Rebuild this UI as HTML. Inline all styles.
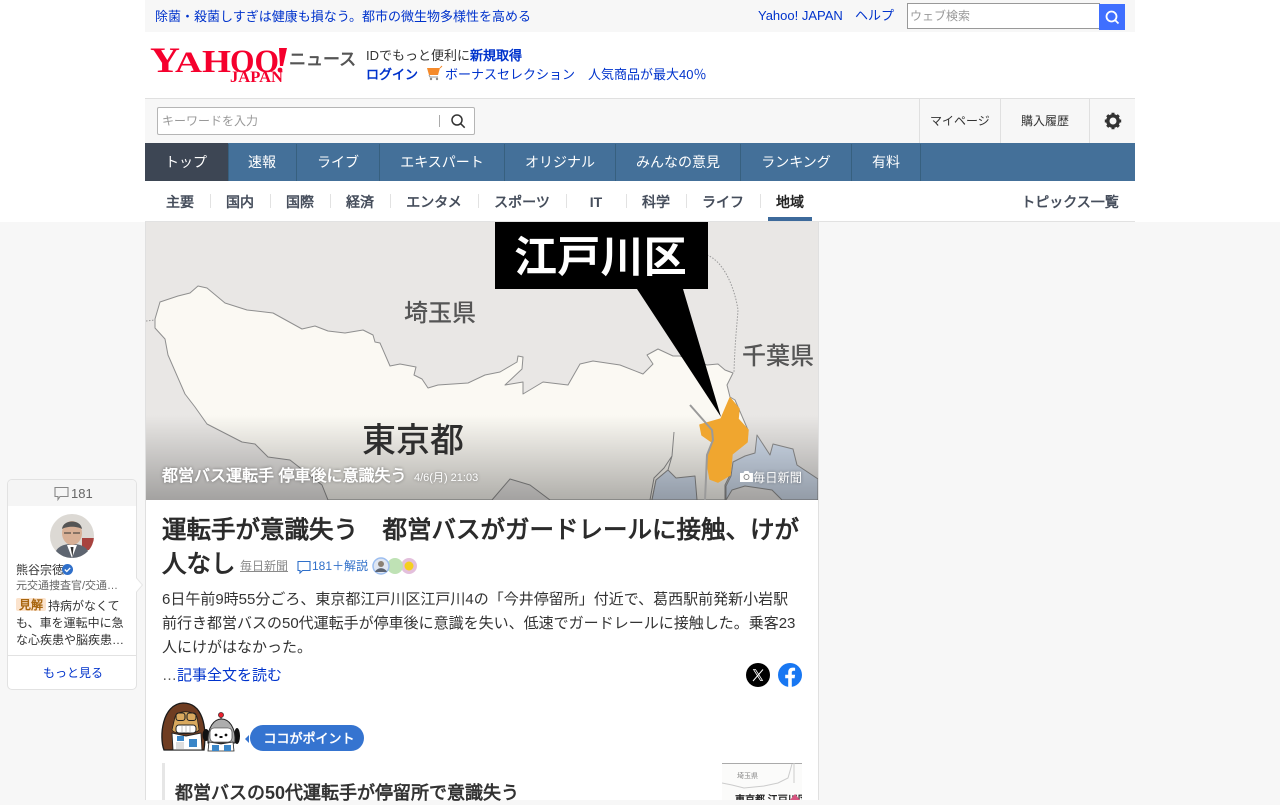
<!DOCTYPE html>
<html lang="ja"><head><meta charset="utf-8"><title>Yahoo!ニュース</title>
<style>
html,body{margin:0;padding:0}
body{width:1280px;height:800px;overflow:hidden;position:relative;background:#f7f7f7;font-family:"Liberation Sans","WenQuanYi Zen Hei",sans-serif;color:#333}
.a{position:absolute}
.t{position:absolute;white-space:nowrap}
.l{color:#0033cc}
.j{font-family:"Noto Sans CJK JP",sans-serif}
.n{color:#fff;font-size:14px;line-height:38px;top:143px;text-align:center;transform:translateX(-50%)}
.s{top:193px;font-size:14px;font-weight:700;line-height:18px;color:#464e5c;transform:translateX(-50%)}
.v{position:absolute;top:144px;width:1px;height:37px;background:#37607f}
.d{position:absolute;top:194px;width:1px;height:14px;background:#e2e2e2}
</style></head><body>
<div class="a" style="left:0;top:0;width:1280px;height:222px;background:#fff"></div>
<div class="a" style="left:145px;top:0;width:990px;height:32px;background:#f7f7f7"></div>
<div class="t l" style="left:155px;top:7px;font-size:13px;line-height:18px">除菌<span class="j">・</span>殺菌しすぎは健康も損なう。都市の微生物多様性を高める</div>
<div class="t l" style="left:758px;top:7px;font-size:13px;line-height:18px">Yahoo! JAPAN</div>
<div class="t l" style="left:855px;top:7px;font-size:13px;line-height:18px">ヘルプ</div>
<div class="a" style="left:907px;top:3px;width:191px;height:24px;border:1px solid #999;background:#fff"></div>
<div class="t" style="left:910px;top:8px;font-size:12px;line-height:16px;color:#999">ウェブ検索</div>
<div class="a" style="left:1099px;top:4px;width:26px;height:26px;background:#3f6fff"></div>
<svg class="a" style="left:1099px;top:4px" width="26" height="26" fill="none" stroke="#fff" stroke-width="1.800"><circle cx="12.500" cy="12.500" r="5"/><path d="M16 16l3.500 3.500"/></svg>

<svg class="a" style="left:148px;top:44px" width="142" height="42">
<g font-family="Liberation Serif,serif" font-weight="700" fill="#f5002d">
<text x="2" y="28" font-size="36" textLength="30" lengthAdjust="spacingAndGlyphs">Y</text>
<text x="27" y="28" font-size="30" textLength="27" lengthAdjust="spacingAndGlyphs">A</text>
<text x="54" y="28" font-size="32" textLength="29" lengthAdjust="spacingAndGlyphs">H</text>
<text x="82" y="28" font-size="33" textLength="49" lengthAdjust="spacingAndGlyphs">OO</text>
<text x="82" y="38" font-size="16" textLength="53" lengthAdjust="spacingAndGlyphs">JAPAN</text>
</g>
<path d="M131 4l8 0-4 18h-3z" fill="#f5002d"/><circle cx="132" cy="26" r="2.400" fill="#f5002d"/>
</svg>
<div class="t" style="left:289px;top:48px;font-size:17px;line-height:24px;font-weight:700;color:#555">ニュース</div>
<div class="t" style="left:366px;top:47px;font-size:13px;line-height:18px;color:#333">IDでもっと便利に<b class="l">新規取得</b></div>
<div class="t l" style="left:366px;top:66px;font-size:13px;line-height:18px;font-weight:700">ログイン</div>
<svg class="a" style="left:426px;top:65px" width="18" height="16"><path d="M1 3h13l-2 7H3z" fill="#f58a2a"/><path d="M3 10l1 2h8" stroke="#999" fill="none"/><circle cx="5" cy="14" r="1.200" fill="#888"/><circle cx="11" cy="14" r="1.200" fill="#888"/><path d="M14 3l2-2" stroke="#f58a2a"/></svg>
<div class="t l" style="left:445px;top:66px;font-size:13px;line-height:18px">ボーナスセレクション　人気商品が最大40％</div>

<div class="a" style="left:145px;top:98px;width:990px;height:45px;background:#f7f7f7;border-top:1px solid #e0e0e0;box-sizing:border-box"></div>
<div class="a" style="left:157px;top:107px;width:316px;height:26px;background:#fff;border:1px solid #b5b5b5;border-radius:2px"></div>
<div class="t" style="left:162px;top:113px;font-size:12px;line-height:16px;color:#999">キーワードを入力</div>
<div class="a" style="left:439px;top:115px;width:1px;height:12px;background:#aaa"></div>
<svg class="a" style="left:449.500px;top:112.500px" width="18" height="18" fill="none" stroke="#333" stroke-width="1.500"><circle cx="7" cy="7" r="5"/><path d="M10.700 10.700l4 4"/></svg>
<div class="a" style="left:919px;top:99px;width:1px;height:44px;background:#e0e0e0"></div>
<div class="a" style="left:1000px;top:99px;width:1px;height:44px;background:#e0e0e0"></div>
<div class="a" style="left:1089px;top:99px;width:1px;height:44px;background:#e0e0e0"></div>
<div class="t" style="left:930px;top:113px;font-size:12px;line-height:16px;color:#333">マイページ</div>
<div class="t" style="left:1021px;top:113px;font-size:12px;line-height:16px;color:#333">購入履歴</div>
<svg class="a" style="left:1104px;top:112px" width="18" height="18" viewBox="0 0 18 18"><circle cx="9" cy="9" r="5.200" fill="none" stroke="#333" stroke-width="3.400"/><g stroke="#333" stroke-width="3"><path d="M9 .8v3M9 14.200v3M.8 9h3M14.200 9h3M3.200 3.200l2.100 2.100M12.700 12.700l2.100 2.100M14.800 3.200l-2.100 2.100M5.300 12.700l-2.100 2.100"/></g></svg>

<div class="a" style="left:145px;top:143px;width:990px;height:38px;background:#447099"></div>
<div class="a" style="left:145px;top:143px;width:83px;height:38px;background:#3d4654"></div>
<div class="v" style="left:228px"></div><div class="v" style="left:296px"></div><div class="v" style="left:379px"></div><div class="v" style="left:504px"></div><div class="v" style="left:615px"></div><div class="v" style="left:740px"></div><div class="v" style="left:851px"></div><div class="v" style="left:920px"></div>
<div class="t n" style="left:186px">トップ</div><div class="t n" style="left:262px">速報</div><div class="t n" style="left:338px">ライブ</div><div class="t n" style="left:442px">エキスパート</div><div class="t n" style="left:560px">オリジナル</div><div class="t n" style="left:678px">みんなの意見</div><div class="t n" style="left:796px">ランキング</div><div class="t n" style="left:886px">有料</div>

<div class="t s" style="left:180px">主要</div><div class="d" style="left:210px"></div>
<div class="t s" style="left:240px">国内</div><div class="d" style="left:270px"></div>
<div class="t s" style="left:300px">国際</div><div class="d" style="left:330px"></div>
<div class="t s" style="left:360px">経済</div><div class="d" style="left:390px"></div>
<div class="t s" style="left:434px">エンタメ</div><div class="d" style="left:478px"></div>
<div class="t s" style="left:522px">スポーツ</div><div class="d" style="left:566px"></div>
<div class="t s" style="left:596px">IT</div><div class="d" style="left:626px"></div>
<div class="t s" style="left:656px">科学</div><div class="d" style="left:686px"></div>
<div class="t s" style="left:723px">ライフ</div><div class="d" style="left:760px"></div>
<div class="t s" style="left:790px;color:#222">地域</div>
<div class="t s" style="left:1070px">トピックス一覧</div>
<div class="a" style="left:768px;top:217px;width:44px;height:4px;background:#3d6a9b"></div>
<div class="a" style="left:145px;top:221px;width:990px;height:1px;background:#e2e2e2"></div>

<div class="a" style="left:145px;top:222px;width:674px;height:578px;background:#fff;border-left:1px solid #e0e0e0;border-right:1px solid #e0e0e0;box-sizing:border-box"></div>

<svg class="a" style="left:146px;top:222px" width="672" height="278" viewBox="146 222 672 278">
<defs><linearGradient id="g" x1="0" y1="0" x2="0" y2="1"><stop offset="0" stop-color="#000" stop-opacity="0"/><stop offset="1" stop-color="#000" stop-opacity=".3"/></linearGradient></defs>
<rect x="146" y="222" width="672" height="278" fill="#e9e7e5"/>
<path d="M155 319L160 302 178 296 190 293 198 286 207 288 225 303 247 310 273 313 302 329 315 326 328 331 345 333 363 330 373 335 375 342 380 343 390 366 400 364 416 367 414 375 422 379 428 388 438 385 468 383 485 375 500 372 517 362 518 356 523 357 522 369 505 385 523 382 523 394 543 382 568 385 580 364 593 361 620 365 643 374 653 364 647 355 658 349 673 356 680 356 707 365 718 364 725 370 733 373 727 385 730 397 735 400 748 430 747 442 732 454 730 475 725 485 725 500 660 500 550 500 530 485 510 479 492 500 328 500 322 485 290 460 268 457 255 444 242 442 207 424 195 407 185 394 168 355 165 339 155 328Z" fill="#fbf9f3" stroke="#8f8f8f" stroke-width="1" stroke-linejoin="round"/>
<path d="M650 500L654 478 664 468 672 456 674 432M672 456L668 470 656 480 652 500" fill="none" stroke="#8f8f8f" stroke-width="1"/>
<path d="M652 500L656 480 668 470 676 478 695 476 697 500ZM733 462L745 456 755 453 757 435 770 455 773 444 793 449 797 465 818 479V500H782L772 490 745 486 732 490 726 500V486L731 476Z" fill="#d2deee" stroke="#8f8f8f" stroke-width="1" stroke-linejoin="round"/>
<rect x="146" y="415" width="672" height="85" fill="url(#g)"/>
<path d="M730 398L739 409 738 419 748 430 747 442 732 454 730 475 718 482 710 479 707 462 712 442 702 435 700 425 721 419 727 405Z" fill="#f0a62f" stroke="#f0a62f" stroke-width="1.500" stroke-linejoin="round"/>
<path d="M690 405L712 430 713 440 707 455 705 500" fill="none" stroke="#9a9a9a" stroke-width="2"/>
<path d="M707 255C725 262 735 290 738 310 737 325 735 340 734 372" fill="none" stroke="#999" stroke-width="1" stroke-dasharray="1.500 1.500"/>
<path d="M146 321L155 320" stroke="#999" stroke-dasharray="1.500 1.500"/>
<rect x="495" y="222" width="213" height="67" fill="#000"/>
<path d="M637 289H683L721 417Z" fill="#000"/>
</svg>
<div class="t j" style="left:514px;top:222px;font-size:43px;line-height:64px;font-weight:700;color:#fff;letter-spacing:.2px">江戸川区</div>
<div class="t j" style="left:404px;top:295px;font-size:24px;line-height:32px;font-weight:500;color:#555">埼玉県</div>
<div class="t j" style="left:742px;top:338px;font-size:24px;line-height:32px;font-weight:500;color:#555">千葉県</div>
<div class="t j" style="left:362px;top:414px;font-size:34px;line-height:48px;font-weight:500;color:#2e2e2e">東京都</div>
<div class="t" style="left:162px;top:466px;font-size:16px;line-height:22px;font-weight:700;color:#fff;text-shadow:0 0 3px rgba(0,0,0,.4)">都営バス運転手 停車後に意識失う</div>
<div class="t" style="left:414px;top:470px;font-size:11px;line-height:16px;color:#fff;text-shadow:0 0 3px rgba(0,0,0,.4)">4/6(月) 21:03</div>
<svg class="a" style="left:740px;top:471px" width="13" height="11"><path d="M0 2h3.500l1-2h4l1 2H13v9H0z" fill="#fff"/><circle cx="6.500" cy="6" r="2.500" fill="none" stroke="#888"/></svg>
<div class="t" style="left:753px;top:469px;font-size:12.250px;line-height:18px;color:#fff;text-shadow:0 0 3px rgba(0,0,0,.4)">毎日新聞</div>

<div class="t" style="left:162px;top:514px;font-size:24.500px;line-height:34px;font-weight:700;color:#2b2b2b">運転手が意識失う　都営バスがガードレールに接触、けが</div>
<div class="t" style="left:162px;top:548px;font-size:24.500px;line-height:34px;font-weight:700;color:#2b2b2b">人なし</div>
<div class="t" style="left:240px;top:557px;font-size:12px;line-height:18px;color:#8a8a8a;text-decoration:underline">毎日新聞</div>
<svg class="a" style="left:297px;top:560px" width="15" height="14" fill="none" stroke="#2f6fc9" stroke-width="1.100"><path d="M1 1.500h12v9H5.500L3 13v-2.500H1z"/></svg>
<div class="t" style="left:312px;top:557px;font-size:12px;line-height:18px;color:#2f6fc9">181＋解説</div>
<svg class="a" style="left:372px;top:557px" width="46" height="18"><circle cx="37" cy="9" r="8" fill="#e3bfdc"/><circle cx="37" cy="9" r="4.500" fill="#f5cf1f"/><circle cx="23" cy="9" r="8" fill="#bfe2b5"/><circle cx="9" cy="9" r="8" fill="#dfe6f2" stroke="#9cbef0" stroke-width="1.500"/><circle cx="9" cy="7" r="3" fill="#8b8174"/><path d="M3 15c2-5 10-5 12 0" fill="#5c6472"/></svg>

<div class="t" style="left:162px;top:588px;font-size:15px;line-height:24px;color:#333">6日午前9時55分ごろ、東京都江戸川区江戸川4の「今井停留所」付近で、葛西駅前発新小岩駅</div>
<div class="t" style="left:162px;top:612px;font-size:15px;line-height:24px;color:#333">前行き都営バスの50代運転手が停車後に意識を失い、低速でガードレールに接触した。乗客23</div>
<div class="t" style="left:162px;top:636px;font-size:15px;line-height:24px;color:#333">人にけがはなかった。</div>
<div class="t" style="left:162px;top:664px;font-size:15px;line-height:24px;color:#0033cc"><span style="color:#555">…</span>記事全文を読む</div>
<svg class="a" style="left:746px;top:663px" width="24" height="24"><circle cx="12" cy="12" r="12" fill="#000"/><path d="M17 6.500 7 18" stroke="#fff" stroke-width="1" fill="none"/><path d="M7.500 6.500h2l7 11h-2z" fill="none" stroke="#fff" stroke-width=".8"/></svg>
<svg class="a" style="left:778px;top:663px" width="24" height="24"><circle cx="12" cy="12" r="12" fill="#1877f2"/><path d="M10.200 24v-8.800H7.200v-3.400h3V9.200c0-3 1.800-4.600 4.500-4.600 1.300 0 2.400.2 2.400.2v2.900h-1.400c-1.500 0-1.900.9-1.900 1.800v2.300h3.300l-.5 3.400h-2.800V24z" fill="#fff"/></svg>

<svg class="a" style="left:150px;top:695px" width="100" height="60" viewBox="0 0 100 60">
<path d="M14 55C9 42 12 9 33 8c20 0 24 24 21 47z" fill="#6f3d22" stroke="#1a1a1a" stroke-width="1.300"/>
<path d="M25 22c1-7 20-7 22 0l2 13c-4 5-24 5-27 0z" fill="#d9a95e" stroke="#1a1a1a" stroke-width=".7"/>
<rect x="26" y="18" width="9" height="7.500" rx="2.500" fill="none" stroke="#222" stroke-width="1.100"/><rect x="37" y="18" width="9" height="7.500" rx="2.500" fill="none" stroke="#222" stroke-width="1.100"/>
<rect x="26" y="30" width="20" height="8" rx="3" fill="#fff" stroke="#222"/><path d="M32 30v8M36 30v8M40 30v8" stroke="#999" stroke-width=".6"/>
<path d="M22 38l14 3 15-3 1 17H23z" fill="#fff" stroke="#222" stroke-width=".9"/><rect x="26" y="47" width="8" height="7" fill="#dedede"/><rect x="27" y="41" width="7" height="5" fill="#3a86c8"/><rect x="39" y="44" width="8" height="8" fill="#3a86c8"/>
<ellipse cx="56" cy="40" rx="3.500" ry="6" fill="#111"/><ellipse cx="87" cy="41" rx="3" ry="8" fill="#111"/>
<path d="M58 48c-2-32 29-32 27 0z" fill="#adadad" stroke="#222"/><rect x="60" y="33" width="22" height="14" rx="4" fill="#fff" stroke="#222" stroke-width=".6"/>
<circle cx="66" cy="40" r="1.400" fill="#111"/><circle cx="76" cy="40" r="1.400" fill="#111"/><path d="M69.500 41h3v2h-3z" fill="#111"/>
<path d="M71 24v-3" stroke="#222"/><circle cx="71" cy="20" r="2.600" fill="#e8212e" stroke="#222" stroke-width=".6"/>
<path d="M59 47l12 2 12-2 1 9H58z" fill="#fff" stroke="#222" stroke-width=".8"/><rect x="62" y="50" width="7" height="6" fill="#3a86c8"/><rect x="74" y="50" width="7" height="6" fill="#3a86c8"/>
</svg>
<div class="a" style="left:245px;top:735px;width:0;height:0;border:4px solid transparent;border-right-color:#3574d0;border-left:0"></div>
<div class="t" style="left:250px;top:725px;width:114px;height:26px;padding-left:4px;box-sizing:border-box;border-radius:13px;background:#3574d0;color:#fff;font-size:13px;line-height:27px;font-weight:700;text-align:center">ココがポイント</div>
<div class="a" style="left:162px;top:763px;width:3px;height:37px;background:#e6e6e6"></div>
<div class="t" style="left:175px;top:781px;font-size:18px;line-height:24px;font-weight:700;color:#333">都営バスの50代運転手が停留所で意識失う</div>
<svg class="a" style="left:722px;top:763px" width="80" height="37" viewBox="0 0 80 37"><rect width="80" height="37" fill="#fbfbfa"/><path d="M0 .5H80" stroke="#aaa"/><path d="M0 20l10 2 12 3 20-2 14-3 10-5 4-14M72 0v20" fill="none" stroke="#ccc"/><text x="15" y="15" font-size="7" fill="#888" font-family="Liberation Sans,WenQuanYi Zen Hei,sans-serif">埼玉県</text><text x="13" y="40" font-size="10" font-weight="700" fill="#222" font-family="Liberation Sans,WenQuanYi Zen Hei,sans-serif">東京都 江戸川区</text><path d="M68 37l5-6 5 6z" fill="#d85580"/></svg>

<div class="a" style="left:7px;top:479px;width:130px;height:211px;background:#fff;border:1px solid #e2e2e2;border-radius:5px;box-sizing:border-box;overflow:hidden">
<div style="height:26px;background:#f5f5f5"></div>
</div>
<svg class="a" style="left:136px;top:578px" width="7" height="14"><path d="M0 0l6 7-6 7z" fill="#fff"/><path d="M.5 0l6 7-6 7" fill="none" stroke="#e6e6e6"/></svg>
<svg class="a" style="left:54px;top:486px" width="15" height="15" fill="none" stroke="#888" stroke-width="1.100"><path d="M1 1.500h13v9H6L4 13.500v-3H1z"/></svg>
<div class="t" style="left:71px;top:485px;font-size:13px;line-height:17px;color:#666">181</div>
<svg class="a" style="left:50px;top:514px" width="44" height="44"><defs><clipPath id="c"><circle cx="22" cy="22" r="22"/></clipPath></defs><g clip-path="url(#c)"><rect width="44" height="44" fill="#dcd9d4"/><rect x="32" y="24" width="12" height="12" fill="#a8433f"/><path d="M4 44c1-12 10-14 18-14s17 2 18 14z" fill="#5e6570"/><path d="M17 31h10l-5 13z" fill="#fff"/><path d="M20.500 33h3l-1 10z" fill="#333"/><ellipse cx="22" cy="19" rx="10" ry="12" fill="#d8b096"/><path d="M12 15c1-10 19-10 20 0-5-3-15-3-20 0z" fill="#555"/><path d="M14 19h7M23 19h7" stroke="#333"/></g></svg>
<div class="t" style="left:16px;top:562px;font-size:12px;line-height:17px;color:#333">熊谷宗徳</div>
<svg class="a" style="left:62px;top:564px" width="11" height="11"><circle cx="5.500" cy="5.500" r="5.500" fill="#2f6fc9"/><path d="M2.800 5.500l2 2 3.400-3.600" fill="none" stroke="#fff" stroke-width="1.300"/></svg>
<div class="t" style="left:16px;top:578px;font-size:11px;line-height:17px;color:#666">元交通捜査官/交通…</div>
<div class="a" style="left:16px;top:598px;width:30px;height:13px;background:#fbe3cd;border-radius:2px"></div>
<div class="t" style="left:19px;top:598px;font-size:12px;line-height:15px;font-weight:700;color:#a8660f">見解</div>
<div class="t" style="left:48px;top:597px;font-size:12px;line-height:18px;color:#333">持病がなくて</div>
<div class="t" style="left:16px;top:614px;font-size:12px;line-height:18px;color:#333">も、車を運転中に急</div>
<div class="t" style="left:16px;top:631px;font-size:12px;line-height:18px;color:#333">な心疾患や脳疾患…</div>
<div class="a" style="left:8px;top:655px;width:128px;height:1px;background:#e2e2e2"></div>
<div class="t" style="left:43px;top:664px;font-size:12px;line-height:18px;color:#0033cc">もっと見る</div>
</body></html>
